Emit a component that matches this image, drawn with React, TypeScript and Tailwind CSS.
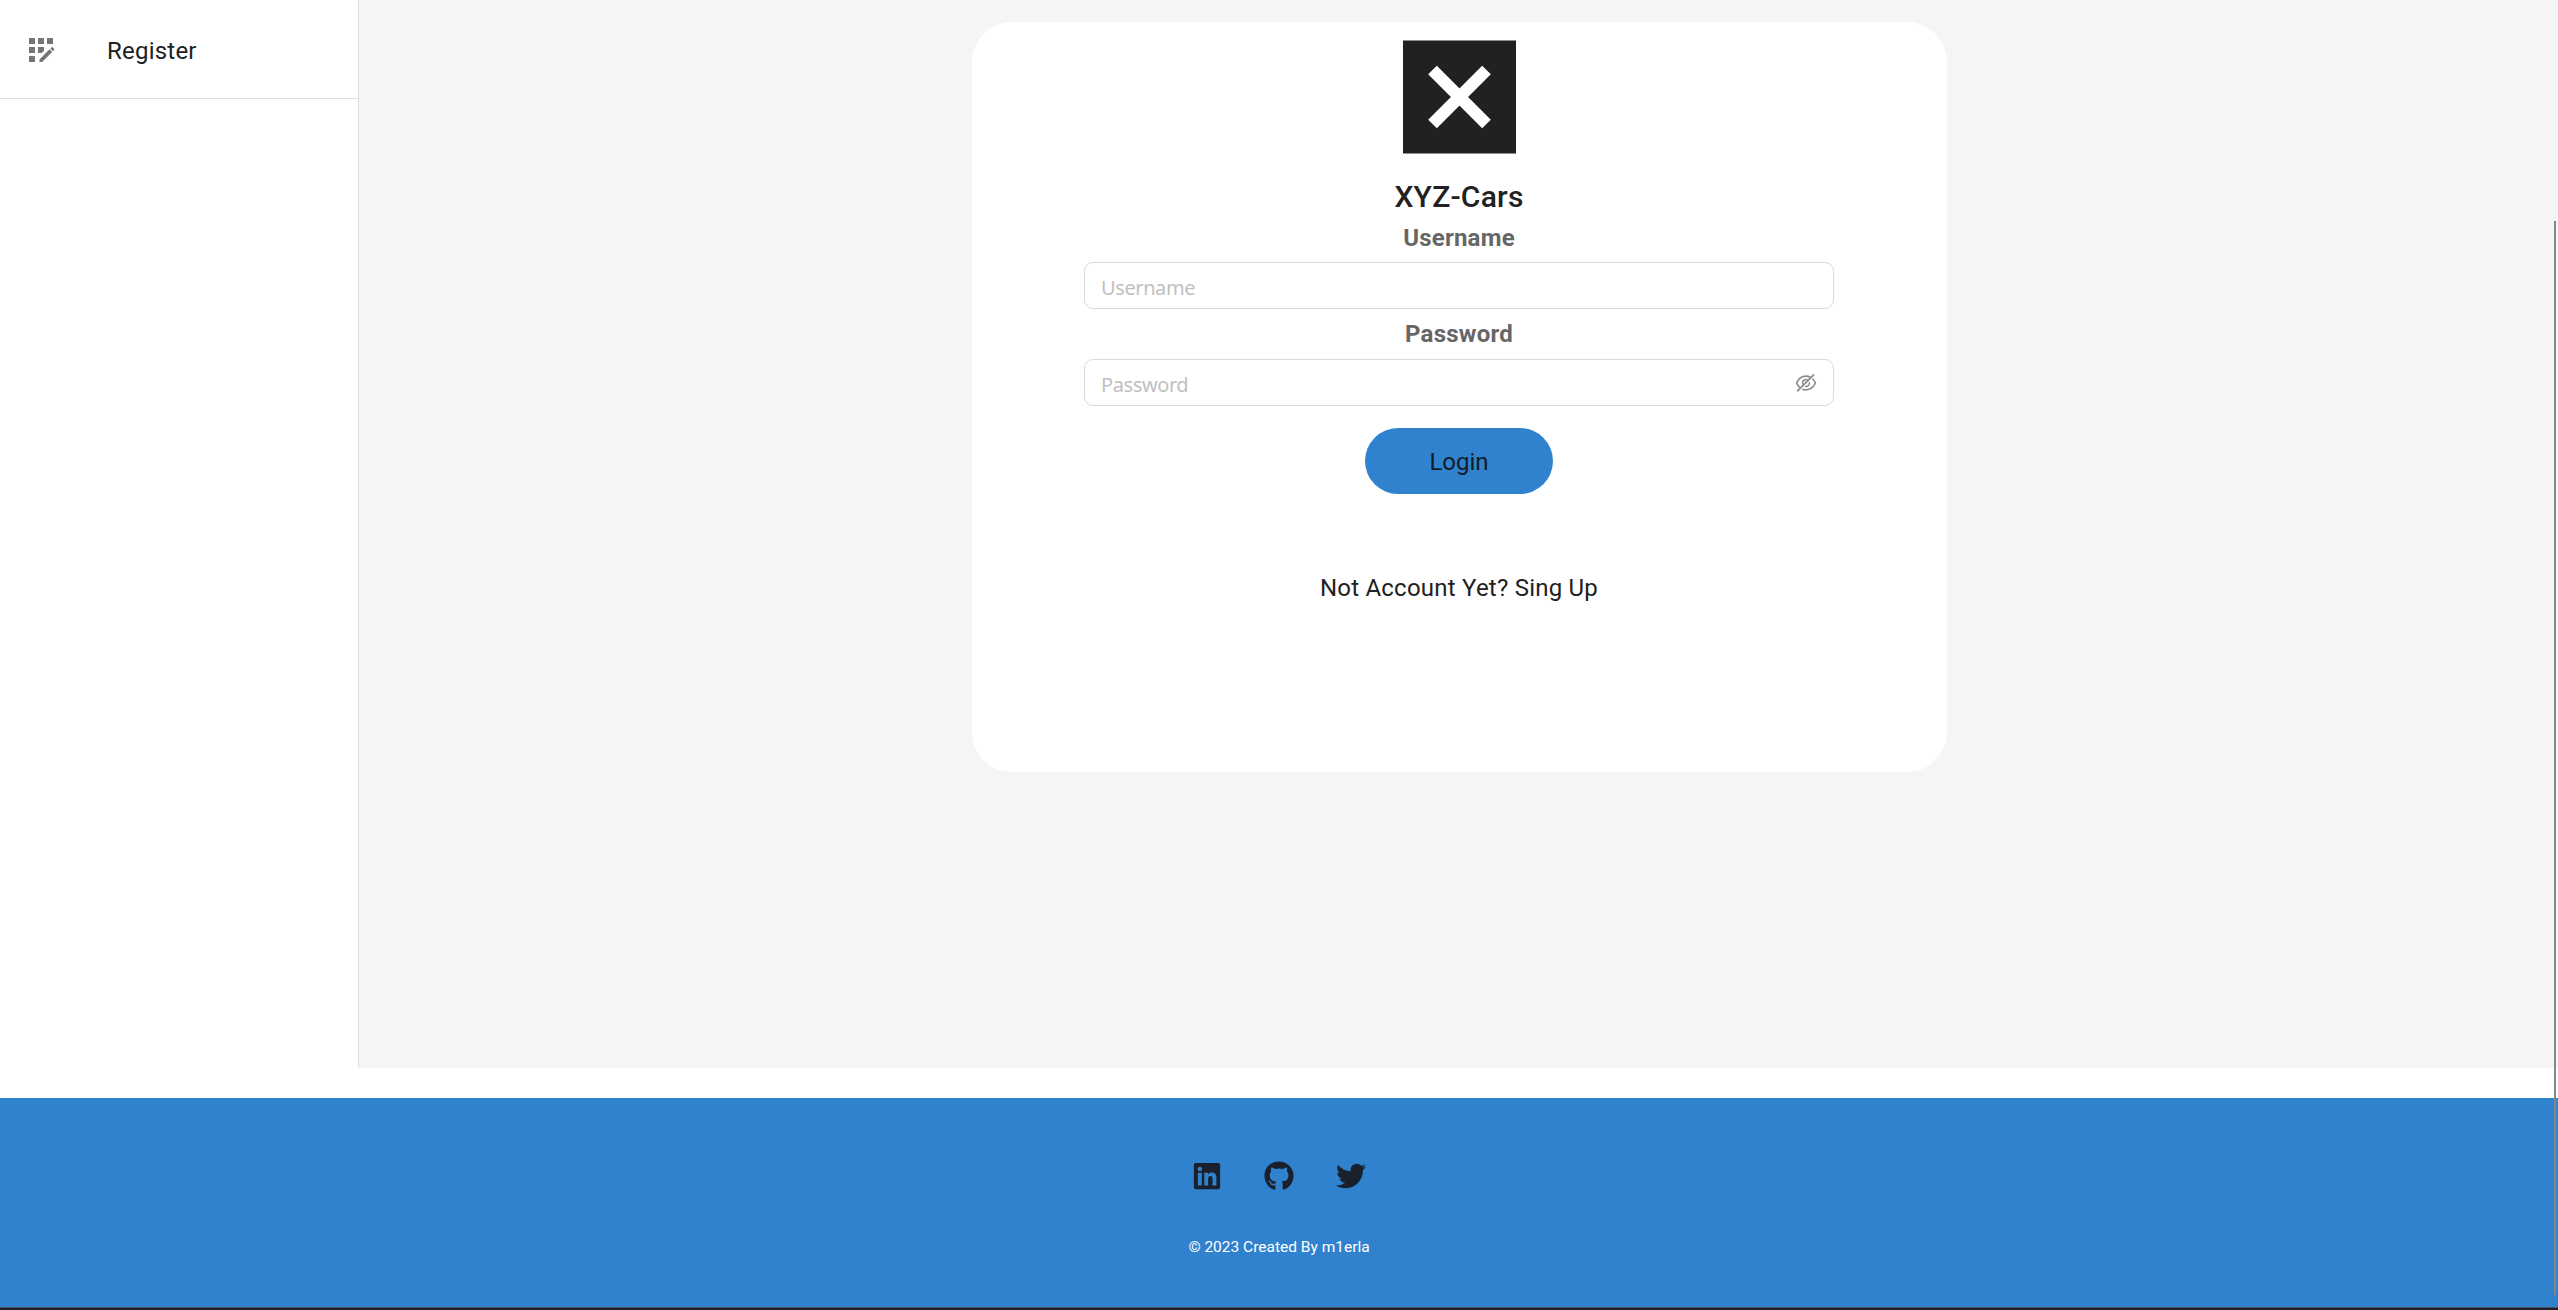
import { AiOutlineEyeInvisible } from "react-icons/ai";
import { FaGithub, FaLinkedin, FaTwitter } from "react-icons/fa";
import { MdAppRegistration } from "react-icons/md";

function Sidebar() {
  return (
    <aside className="w-[359px] shrink-0 border-r border-[#dedede] bg-white">
      <a className="flex h-[99px] items-center border-b border-[#dedede] pt-[3px] pl-[23px]">
        <MdAppRegistration className="mb-[2px] size-9 text-[#757575]" />
        <span className="ml-12 text-2xl leading-9 tracking-[0.225px]">Register</span>
      </a>
    </aside>
  );
}

function Logo() {
  return (
    <svg viewBox="0 0 113 114" className="mt-[18px] h-[114px] w-[113px] shrink-0">
      <rect y="0.5" width="113" height="113" fill="#212121" />
      <path d="M29.5 30 83.5 84M83.5 30 29.5 84" stroke="#fff" strokeWidth="12.2" />
    </svg>
  );
}

const field =
  "h-[47px] w-full rounded-[9px] border border-[#d9d9d9] bg-white px-4 pt-[3px] font-['Noto_Sans',sans-serif] text-[20px] tracking-[-0.4px] outline-none placeholder:text-[#bfbfbf]";

function LoginCard() {
  return (
    <form className="mt-[22px] flex h-[750px] w-[975px] flex-col items-center rounded-[40px] bg-white">
      <Logo />
      <h1 className="mt-[19px] text-[30px] leading-[48px] font-medium tracking-[0.225px]">XYZ-Cars</h1>
      <label className="-mt-px text-2xl leading-9 font-bold tracking-[0.225px] text-[#666]">Username</label>
      <div className="mt-[6px] w-[750px]">
        <input className={field} placeholder="Username" />
      </div>
      <label className="mt-[7px] text-2xl leading-9 font-bold tracking-[0.225px] text-[#666]">Password</label>
      <div className="relative mt-[7px] w-[750px]">
        <input className={field} placeholder="Password" type="password" />
        <AiOutlineEyeInvisible className="absolute top-[12px] right-[16px] size-6 text-[#8c8c8c]" />
      </div>
      <button
        type="button"
        className="mt-[22px] h-[66px] w-[188px] rounded-full bg-[#3182ce] pt-[2px] text-2xl text-[#101c28]"
      >
        Login
      </button>
      <p className="mt-[76px] text-2xl leading-9 tracking-[0.225px]">Not Account Yet? Sing Up</p>
    </form>
  );
}

function Footer() {
  return (
    <footer className="flex h-[209px] flex-col items-center bg-[#3182ce] text-[#1a202c]">
      <div className="mt-[63px] flex gap-[42px] text-[30px]">
        <FaLinkedin />
        <FaGithub />
        <FaTwitter />
      </div>
      <p className="mt-[44px] text-[15.5px] leading-6 text-white">© 2023 Created By m1erla</p>
    </footer>
  );
}

export default function App() {
  return (
    <div className="relative h-[1310px] w-[2558px] overflow-hidden bg-white font-['Roboto',sans-serif] text-[#212121]">
      <div className="mb-[30px] flex h-[1068px]">
        <Sidebar />
        <main className="flex flex-1 justify-center bg-[#f5f5f5] pl-px">
          <LoginCard />
        </main>
      </div>
      <Footer />
      <div className="h-[3px] border-t border-[#4a5058] bg-[#1a202c]" />
      <div className="absolute top-[221px] right-[2px] h-[1074px] w-[2px] bg-[#868686]" />
    </div>
  );
}
